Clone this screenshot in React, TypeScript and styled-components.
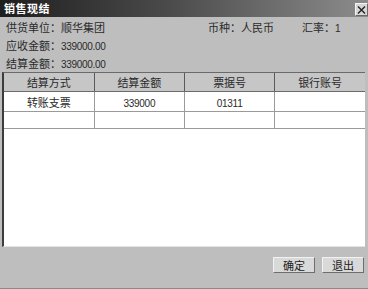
import React from 'react';
import styled, {createGlobalStyle} from 'styled-components';

const GlobalStyle = createGlobalStyle`
  html, body {
    margin: 0;
    padding: 0;
    background: #bdbdbd;
  }
  body {
    font-family: "Noto Sans CJK SC", "Liberation Sans", sans-serif;
  }
`

const Dialog = styled.div`
  width: 368px;
  height: 289px;
  background: #bebebe;
  display: flex;
  flex-direction: column;
  box-sizing: border-box;
  border-bottom: 1px solid #8a8a8a;
  overflow: hidden;
`

const TitleBar = styled.div`
  height: 17px;
  flex: none;
  display: flex;
  align-items: center;
  justify-content: space-between;
  padding-left: 4px;
  background: linear-gradient(to right, #1e1e1e 0%, #4a4a4a 45%, #8c8c8c 100%);
`

const Title = styled.span`
  color: #fff;
  font-size: 11px;
  font-weight: bold;
  line-height: 17px;
  letter-spacing: 0.5px;
`

const CloseButton = styled.div`
  width: 13px;
  height: 13px;
  margin-top: 2px;
  box-sizing: border-box;
  background: #d6d6d6;
  border: 1px solid;
  border-color: #f4f4f4 #6a6a6a #6a6a6a #f4f4f4;
  display: flex;
  align-items: center;
  justify-content: center;
`

const Info = styled.div`
  padding: 1px 0 0 6px;
  height: 54px;
  flex: none;
  display: flex;
  flex-direction: column;
`

const InfoRow = styled.div`
  height: 18px;
  display: flex;
  align-items: center;
  font-size: 11px;
  color: #2a2a2a;
`

const Field = styled.span<{ width?: number }>`
  display: inline-block;
  width: ${p => (p.width ? p.width + 'px' : 'auto')};
  white-space: nowrap;
`

const Num = styled.span`
  font-family: "Liberation Sans", sans-serif;
  font-size: 10px;
  letter-spacing: -0.3px;
`

const TableBox = styled.div`
  margin: 0 3px 0 2px;
  height: 175px;
  flex: none;
  background: #fff;
  box-sizing: border-box;
  border-left: 2px solid #3c3c3c;
  border-top: 1px solid #6a6a6a;
  border-bottom: 1px solid #e2e2e2;
`

const Grid = styled.table`
  width: 100%;
  border-collapse: collapse;
  table-layout: fixed;
`

const HeadCell = styled.th`
  height: 18px;
  padding: 0;
  background: #c6c6c6;
  font-weight: normal;
  font-size: 11px;
  color: #2a2a2a;
  text-align: center;
  border-right: 1px solid #5a5a5a;
  border-bottom: 1px solid #6a6a6a;
  &:last-child { border-right: none; }
`

const Cell = styled.td<{ h: number }>`
  height: ${p => p.h}px;
  padding: 0;
  font-size: 11px;
  color: #2a2a2a;
  text-align: center;
  border-right: 1px solid #9a9a9a;
  border-bottom: 1px solid #9a9a9a;
  &:last-child { border-right: none; }
`

const Footer = styled.div`
  flex: 1;
  display: flex;
  justify-content: flex-end;
  align-items: flex-start;
  gap: 7px;
  padding: 10px 4px 0 0;
`

const Button = styled.button`
  width: 42px;
  height: 16px;
  padding: 0;
  box-sizing: border-box;
  background: #d9d9d9;
  border: 1px solid;
  border-color: #f2f2f2 #6e6e6e #6e6e6e #f2f2f2;
  font-family: "Noto Sans CJK SC", sans-serif;
  font-size: 11px;
  color: #222;
  line-height: 14px;
`

const columns = ['结算方式', '结算金额', '票据号', '银行账号']
const rows = [
    {h: 19, cells: ['转账支票', '339000', '01311', '']},
    {h: 16, cells: ['', '', '', '']},
]

const App = () => {
    return (
        <>
            <GlobalStyle/>
            <Dialog>
                <TitleBar>
                    <Title>销售现结</Title>
                    <CloseButton>
                        <svg width="9" height="8" viewBox="0 0 9 8">
                            <path d="M1 0.5 L8 7.5 M8 0.5 L1 7.5" stroke="#222" strokeWidth="1.4"/>
                        </svg>
                    </CloseButton>
                </TitleBar>
                <Info>
                    <InfoRow>
                        <Field width={202}>供货单位：顺华集团</Field>
                        <Field width={94}>币种：人民币</Field>
                        <Field>汇率：<Num>1</Num></Field>
                    </InfoRow>
                    <InfoRow>
                        <Field>应收金额：<Num>339000.00</Num></Field>
                    </InfoRow>
                    <InfoRow>
                        <Field>结算金额：<Num>339000.00</Num></Field>
                    </InfoRow>
                </Info>
                <TableBox>
                    <Grid>
                        <thead>
                        <tr>
                            {columns.map(c => <HeadCell key={c}>{c}</HeadCell>)}
                        </tr>
                        </thead>
                        <tbody>
                        {rows.map((r, i) => (
                            <tr key={i}>
                                {r.cells.map((c, j) => (
                                    <Cell key={j} h={r.h}>{j === 1 || j === 2 ? <Num>{c}</Num> : c}</Cell>
                                ))}
                            </tr>
                        ))}
                        </tbody>
                    </Grid>
                </TableBox>
                <Footer>
                    <Button>确定</Button>
                    <Button>退出</Button>
                </Footer>
            </Dialog>
        </>
    );
};

export default App;
